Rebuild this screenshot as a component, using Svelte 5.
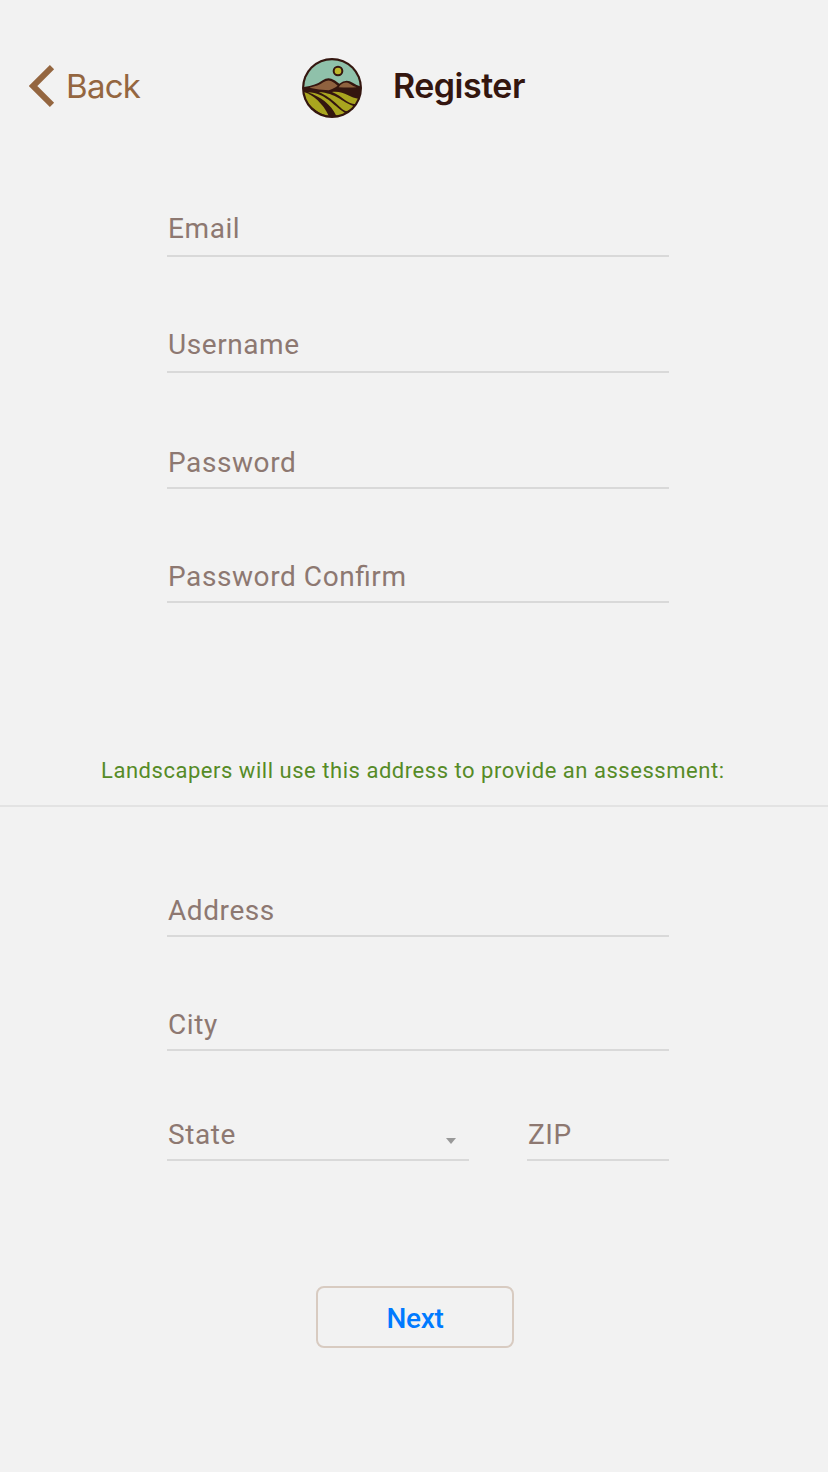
<script>
  const account = [
    { label: 'Email', gap: 0, pad: 10 },
    { label: 'Username', gap: 72, pad: 10 },
    { label: 'Password', gap: 74, pad: 8 },
    { label: 'Password Confirm', gap: 72, pad: 8 }
  ];
</script>

<main>
  <header>
    <div class="back">
      <svg width="26" height="44" viewBox="0 0 26 44" fill="none" stroke="#946640" stroke-width="6"><path d="M23 3.2 4 22l19 18.8" /></svg>
      <span>Back</span>
    </div>
    <svg class="logo" width="60" height="60" viewBox="18 18 180 180">
      <defs><clipPath id="disc"><circle cx="108" cy="108" r="83.5" /></clipPath></defs>
      <circle cx="108" cy="108" r="90" fill="#34160f" />
      <g clip-path="url(#disc)">
        <path d="M18 18h180v87q-14-4-28-13-20-13-40 3-14-12-24-15-14-4-26 5-22 17-62 21z" fill="#8fc1aa" />
        <path d="M40 107q27-5 42-16 13-9 23-4 11 5 20 14-5 5-15 9-8 3-12 5-29-1-58-8z" fill="#8f623f" />
        <path d="M128 106q4-7 13-12 10-5 20 1 10 7 21 11-24 1-54 0z" fill="#8f623f" />
        <g fill="#a9a51f">
          <path d="M20 119C46 124 80 152 98 191C72 189 30 160 20 119Z" />
          <path d="M36 121C90 124 108 158 147 183C138 191 128 191 120 190C106 158 72 134 36 121Z" />
          <path d="M68 120C122 124 134 148 174 163C166 172 156 177 150 178C126 166 116 141 68 120Z" />
          <path d="M108 120C146 116 160 138 190 141C188 148 184 154 180 157C150 156 140 132 108 120Z" />
        </g>
      </g>
      <circle cx="126" cy="57" r="13" fill="#bdb72b" stroke="#34160f" stroke-width="6" />
    </svg>
    <h1>Register</h1>
  </header>

  <section class="account">
    {#each account as f}
      <div class="field" style="margin-top: {f.gap}px; padding-bottom: {f.pad}px">{f.label}</div>
    {/each}
  </section>

  <p class="note">Landscapers will use this address to provide an assessment:</p>

  <section class="address">
    <div class="field">Address</div>
    <div class="field">City</div>
    <div class="pair">
      <div class="field state">State<svg width="10" height="6" viewBox="0 0 10 6"><path d="M0 0h10L5 6z" fill="#999" /></svg></div>
      <div class="field zip">ZIP</div>
    </div>
  </section>

  <button type="button">Next</button>
</main>

<style>
  :global(body) { background: #f2f2f2; }
  main {
    box-sizing: border-box;
    width: 828px;
    height: 1472px;
    overflow: hidden;
    background: #f2f2f2;
    font-family: Roboto, sans-serif;
    display: flex;
    flex-direction: column;
  }
  header {
    height: 60px;
    padding: 58px 0 95px 29px;
    display: flex;
    font-family: Inter, sans-serif;
    font-size: 34px;
    line-height: 40px;
  }
  .back { width: 273px; display: flex; color: #946640; }
  .back svg { margin-top: 6px; }
  .back span { margin: 8px 0 0 11px; font-size: 33px; letter-spacing: -0.7px; }
  h1 {
    margin: 8px 0 0 31px;
    font-size: 34px;
    font-weight: 600;
    line-height: 40px;
    letter-spacing: -0.5px;
    color: #34160f;
  }
  section { width: 502px; margin-left: 167px; }
  .field {
    padding: 0 0 8px 1px;
    border-bottom: 2px solid #d9d9d9;
    color: #8d7871;
    font-size: 28px;
    line-height: 32px;
    letter-spacing: 0.58px;
    font-feature-settings: "liga" 1;
  }
  .note {
    box-sizing: border-box;
    height: 61px;
    margin: 143px 0 0;
    padding: 12px 0 0 101px;
    border-bottom: 2px solid #e3e3e3;
    color: #568b27;
    font-size: 22px;
    line-height: 26px;
    letter-spacing: 0.53px;
    white-space: nowrap;
  }
  .address {
    margin-top: 88px;
    display: flex;
    flex-direction: column;
    gap: 72px;
  }
  .pair { display: flex; justify-content: space-between; margin-top: -4px; }
  .state { box-sizing: border-box; width: 302px; display: flex; justify-content: space-between; }
  .state svg { margin: 19px 13px 0 0; }
  .zip { width: 142px; box-sizing: border-box; }
  button {
    box-sizing: border-box;
    width: 198px;
    height: 62px;
    margin: 125px 0 0 316px;
    padding: 4px 0 0;
    border: 2px solid #d8cbc1;
    border-radius: 8px;
    background: transparent;
    color: #007aff;
    font-family: Roboto, sans-serif;
    font-size: 28px;
    font-weight: 500;
    line-height: 32px;
    letter-spacing: -0.3px;
  }
</style>
